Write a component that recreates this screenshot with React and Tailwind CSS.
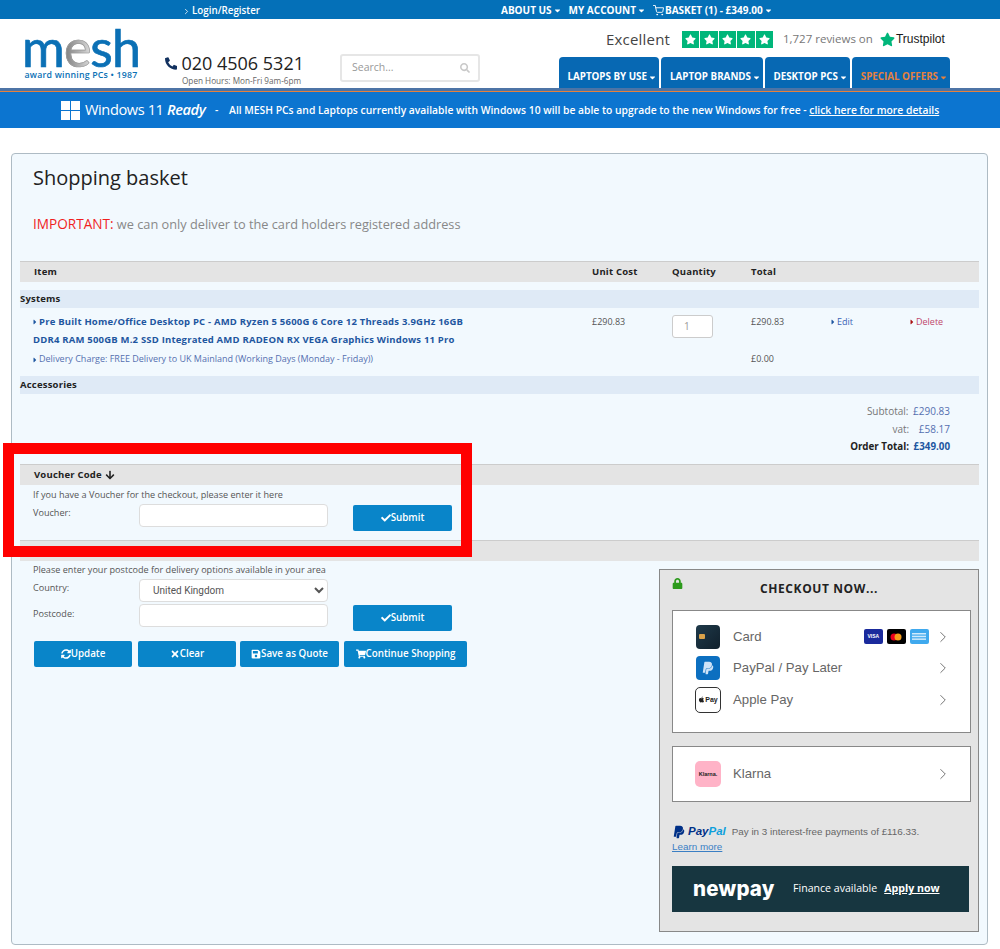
import {
  FaArrowDown,
  FaCaretDown,
  FaCaretRight,
  FaCheck,
  FaLock,
  FaPhoneAlt,
  FaSave,
  FaSearch,
  FaShoppingCart,
  FaStar,
  FaSyncAlt,
  FaTimes,
  FaApple,
  FaPaypal,
} from 'react-icons/fa';
import { FiChevronRight, FiShoppingCart } from 'react-icons/fi';

const TopLink = ({ children }) => (
  <span className="flex items-center gap-[1px] text-[10px] font-bold text-white">
    {children}
    <FaCaretDown className="text-[9px]" />
  </span>
);

const NavTab = ({ label, width, orange }) => (
  <div
    className={`flex h-[31px] items-center justify-end gap-[1px] whitespace-nowrap rounded-t-[4px] bg-[#0768b3] pr-[2px] pt-[9px] text-[9.8px] font-bold ${width} ${
      orange ? 'text-[#e5813e]' : 'text-white'
    }`}
  >
    {label}
    <FaCaretDown className="text-[9px]" />
  </div>
);

const Logo = () => (
  <div className="flex w-[112px] flex-col items-center pt-[8px]">
    <div className="flex h-[40px] items-end font-['Lato'] text-[52px] leading-[40px] tracking-[-1px] text-[#0b70b5] [-webkit-text-stroke:0.7px_#0b70b5]">
      <span>m</span>
      <span className="bg-gradient-to-r from-[#7d7d7d] to-[#d8d8d8] bg-clip-text text-transparent [-webkit-text-stroke:0.7px_#9a9a9a]">
        e
      </span>
      <span>sh</span>
    </div>
    <div className="mt-[2px] whitespace-nowrap text-[8.8px] font-semibold leading-[12px] tracking-[0.2px] text-[#0b70b5]">
      award winning PCs • 1987
    </div>
  </div>
);

const Header = () => (
  <>
    <div className="flex h-[19px] items-center bg-[#0470b8] pl-[182px]">
      <span className="flex w-[319px] items-center gap-[1px] pt-[3px] text-[9.8px] font-semibold text-white">
        <FiChevronRight className="text-[9px]" />
        Login/Register
      </span>
      <div className="flex items-center gap-[7px] pt-[1px]">
        <TopLink>ABOUT US</TopLink>
        <TopLink>MY ACCOUNT</TopLink>
        <TopLink>
          <FiShoppingCart className="text-[11px]" />
          BASKET (1) - £349.00
        </TopLink>
      </div>
    </div>

    <div className="flex h-[69px] bg-white pl-[25px]">
      <Logo />
      <div className="ml-[28px] flex w-[139px] flex-col pt-[32px]">
        <div className="flex items-center gap-[4px] text-[#222]">
          <FaPhoneAlt className="text-[13px] text-[#12315f]" />
          <span className="whitespace-nowrap text-[18px] leading-[24px]">020 4506 5321</span>
        </div>
        <span className="whitespace-nowrap pl-[17px] text-[8.2px] leading-[11px] text-[#666]">Open Hours: Mon-Fri 9am-6pm</span>
      </div>
      <div className="ml-[36px] mt-[35px] flex h-[28px] w-[140px] items-center justify-between rounded-[3px] border-2 border-[#e6e6e6] pl-[10px] pr-[8px] text-[10.5px] text-[#999]">
        Search...
        <FaSearch className="text-[10px] text-[#c9c9c9]" />
      </div>
      <div className="ml-[79px] flex w-[392px] flex-col">
        <div className="flex h-[39px] items-center pl-[47px] pt-[2px]">
          <span className="w-[76px] text-[15px] tracking-[0.2px] text-[#444]">Excellent</span>
          <div className="flex gap-[1px]">
            {[0, 1, 2, 3, 4].map((i) => (
              <div key={i} className="flex h-[17px] w-[17.4px] items-center justify-center bg-[#00b67a]">
                <FaStar className="text-[11px] text-white" />
              </div>
            ))}
          </div>
          <span className="ml-[10px] w-[97px] whitespace-nowrap text-[11.5px] text-[#777]">1,727 reviews on</span>
          <FaStar className="mr-[1px] text-[15px] text-[#00b67a]" />
          <span className="font-['Liberation_Sans'] text-[12px] font-medium text-[#191919]">Trustpilot</span>
        </div>
        <div className="flex">
          <NavTab label="LAPTOPS BY USE" width="w-[100px]" />
          <NavTab label="LAPTOP BRANDS" width="ml-[2px] w-[102px]" />
          <NavTab label="DESKTOP PCS" width="ml-[2px] w-[85px]" />
          <NavTab label="SPECIAL OFFERS" width="ml-[2px] w-[98px]" orange />
        </div>
      </div>
    </div>

    <div className="h-[3px] bg-[#4d74a6]" />
    <div className="h-[1px] bg-[#e5813e]" />
    <div className="flex h-[36px] items-center bg-[#0c75d0] pl-[61px] text-white">
      <svg width="19" height="19" viewBox="0 0 19 19" fill="currentColor">
        <rect width="9" height="9" />
        <rect x="10" width="9" height="9" />
        <rect y="10" width="9" height="9" />
        <rect x="10" y="10" width="9" height="9" />
      </svg>
      <span className="ml-[5px] w-[121px] whitespace-nowrap text-[14.6px] tracking-[-0.4px]">
        Windows 11 <em className="font-semibold">Ready</em>
      </span>
      <span className="ml-[9px] whitespace-nowrap pt-[2px] text-[10.33px] font-semibold">
        -&nbsp;&nbsp;&nbsp;&nbsp;All MESH PCs and Laptops currently available with Windows 10 will be able to upgrade to
        the new Windows for free - <span className="underline">click here for more details</span>
      </span>
    </div>
  </>
);

const BasketTable = () => (
  <div className="mx-[8px] mt-[27px]">
    <div className="grid h-[21px] grid-cols-[572px_80px_79px_80px] items-center border-t border-[#ccc] bg-[#e4e4e4] text-[9.5px] font-bold tracking-[0.2px] text-[#222]">
      <span className="pl-[14px]">Item</span>
      <span>Unit Cost</span>
      <span>Quantity</span>
      <span>Total</span>
    </div>
    <div className="mt-[8px] flex h-[18px] items-center bg-[#dfeaf6] text-[9.5px] font-bold tracking-[0.2px] text-[#222]">
      Systems
    </div>
    <div className="grid grid-cols-[572px_80px_79px_80px_79px_69px] pt-[5px] text-[9px] text-[#555]">
      <div className="pl-[13px] text-[9.5px] font-bold leading-[18px] tracking-[0.2px] text-[#1e56a0]">
        <FaCaretRight className="-ml-[2px] inline text-[8px]" />
        Pre Built Home/Office Desktop PC - AMD Ryzen 5 5600G 6 Core 12 Threads 3.9GHz 16GB
        <br />
        DDR4 RAM 500GB M.2 SSD Integrated AMD RADEON RX VEGA Graphics Windows 11 Pro
      </div>
      <span className="leading-[18px]">£290.83</span>
      <div className="pt-[2px]">
        <div className="flex h-[23px] w-[41px] items-center rounded-[3px] border border-[#ccc] bg-white pl-[11px] text-[10px] text-[#999]">
          1
        </div>
      </div>
      <span className="leading-[18px]">£290.83</span>
      <span className="-ml-[2px] flex h-[18px] items-center text-[#3b63b5]">
        <FaCaretRight className="text-[8px] text-[#1e56a0]" />
        Edit
      </span>
      <span className="-ml-[2px] flex h-[18px] items-center text-[#c0476b]">
        <FaCaretRight className="text-[8px] text-[#a11]" />
        Delete
      </span>
      <div className="pl-[13px] pt-[1px] leading-[18px] text-[#5570b0]">
        <FaCaretRight className="-ml-[2px] inline text-[8px] text-[#1e56a0]" />
        Delivery Charge: FREE Delivery to UK Mainland (Working Days (Monday - Friday))
      </div>
      <span />
      <span />
      <span className="pt-[1px] leading-[18px]">£0.00</span>
    </div>
    <div className="mt-[8px] flex h-[18px] items-center bg-[#dfeaf6] text-[9.5px] font-bold tracking-[0.2px] text-[#222]">
      Accessories
    </div>
    <div className="flex flex-col items-end gap-0 pr-[29px] pt-[8px] text-[10px] leading-[18px] text-[#777]">
      <div>
        Subtotal: <span className="ml-[2px] text-[#5570b0]">£290.83</span>
      </div>
      <div>
        vat: <span className="ml-[7px] text-[#5570b0]">£58.17</span>
      </div>
      <div className="text-[9.8px] font-bold text-[#222]">
        Order Total: <span className="ml-[2px] text-[#1e56a0]">£349.00</span>
      </div>
    </div>
  </div>
);

const BlueButton = ({ icon, children, width }) => (
  <button
    type="button"
    className={`flex h-[26px] items-center justify-center whitespace-nowrap rounded-[2px] bg-[#0985c9] text-[9.8px] font-semibold text-white ${width}`}
  >
    {icon}
    {children}
  </button>
);

const textInput = 'h-[23px] w-[189px] rounded-[4px] border border-[#ddd] bg-white';

const LeftForms = () => (
  <div className="w-[639px] pl-[13px] text-[9.1px] text-[#555]">
    <p className="pt-[2px] leading-[14px]">Please enter your postcode for delivery options available in your area</p>
    <div className="flex">
      <div className="w-[106px]">
        <div className="pt-[4px] leading-[14px]">Country:</div>
        <div className="pt-[12px] leading-[14px]">Postcode:</div>
      </div>
      <div className="flex flex-col gap-[2px] pt-[2px]">
        <select className="h-[23px] w-[189px] rounded-[4px] border border-[#ddd] bg-white pl-[9px] font-['Roboto'] text-[10px] text-[#555]">
          <option>United Kingdom</option>
        </select>
        <div className={textInput} />
      </div>
      <div className="ml-[25px] pt-[28px]">
        <BlueButton icon={<FaCheck className="text-[10px]" />} width="w-[99px]">
          Submit
        </BlueButton>
      </div>
    </div>
    <div className="mt-[10px] flex pl-[1px]">
      <BlueButton icon={<FaSyncAlt className="text-[10px]" />} width="w-[98px]">
        Update
      </BlueButton>
      <BlueButton icon={<FaTimes className="text-[10px]" />} width="ml-[6px] w-[98px]">
        Clear
      </BlueButton>
      <BlueButton icon={<FaSave className="text-[10px]" />} width="ml-[4px] w-[99px]">
        Save as Quote
      </BlueButton>
      <BlueButton icon={<FaShoppingCart className="text-[10px]" />} width="ml-[5px] w-[123px]">
        Continue Shopping
      </BlueButton>
    </div>
  </div>
);

const PayRow = ({ icon, label, extra }) => (
  <div className="flex h-[31.5px] items-center pl-[16px] pr-[18px]">
    <div className="flex w-[38px] justify-center">{icon}</div>
    <span className="ml-[6px] flex-1 font-['Liberation_Sans'] text-[13.2px] text-[#666]">{label}</span>
    {extra}
    <FiChevronRight strokeWidth={1.2} className="ml-[5px] text-[18px] text-[#666]" />
  </div>
);

const CardLogos = () => (
  <div className="flex gap-[3.5px]">
    <div className="flex h-[15px] w-[19.5px] items-center justify-center rounded-[2px] bg-[#1a2a9c] font-['Liberation_Sans'] text-[5px] font-bold text-white">
      VISA
    </div>
    <div className="flex h-[15px] w-[19.5px] items-center justify-center rounded-[2px] bg-black">
      <svg width="12" height="8" viewBox="0 0 12 8">
        <circle cx="4" cy="4" r="3.5" fill="#eb001b" />
        <circle cx="8" cy="4" r="3.5" fill="#f79e1b" />
      </svg>
    </div>
    <div className="flex h-[15px] w-[19.5px] items-center justify-center rounded-[2px] bg-[#3fa9ee]">
      <svg width="14" height="7" viewBox="0 0 14 7" fill="#cfeafc">
        <rect width="14" height="1.5" />
        <rect y="2.7" width="14" height="1.5" />
        <rect y="5.4" width="14" height="1.5" />
      </svg>
    </div>
  </div>
);

const CheckoutBox = () => (
  <div className="mt-[8px] h-[363px] w-[320px] border border-[#888] bg-[#e4e4e4] pl-[12px] pr-[7px]">
    <div className="relative flex h-[40px] items-center justify-center pb-[2px] pr-[5px] text-[12px] font-bold tracking-[0.6px] text-[#222]">
      <FaLock className="absolute left-0 top-[8px] text-[11px] text-[#2c9a1c]" />
      CHECKOUT NOW...
    </div>
    <div className="flex h-[123px] flex-col border border-[#888] bg-white pt-[10px]">
      <PayRow
        label="Card"
        extra={<CardLogos />}
        icon={
          <div className="flex h-[24px] w-[24px] items-center rounded-[4px] bg-gradient-to-br from-[#1f3a4a] to-[#10202c] pl-[3px]">
            <div className="h-[5px] w-[6px] rounded-[1px] bg-[#d9a24a]" />
          </div>
        }
      />
      <PayRow
        label="PayPal / Pay Later"
        icon={
          <div className="flex h-[24px] w-[24px] items-center justify-center rounded-[4px] bg-[#0c6fc0]">
            <FaPaypal className="text-[14px] text-[#cfe3f7]" />
          </div>
        }
      />
      <PayRow
        label="Apple Pay"
        icon={
          <div className="flex h-[26px] w-[26px] items-center justify-center rounded-[5px] border border-[#333] bg-white font-['Liberation_Sans'] text-[7px] font-semibold text-[#222]">
            <FaApple className="text-[7px]" />
            Pay
          </div>
        }
      />
    </div>
    <div className="mt-[13px] flex h-[56px] items-center border border-[#888] bg-white">
      <div className="w-full">
        <PayRow
          label="Klarna"
          icon={
            <div className="flex h-[26px] w-[26px] items-center justify-center rounded-[5px] bg-[#ffb3c7] font-['Liberation_Sans'] text-[5.5px] font-bold text-[#222]">
              Klarna.
            </div>
          }
        />
      </div>
    </div>
    <div className="pt-[22px] font-['Liberation_Sans'] text-[9.85px] leading-[15px] text-[#666]">
      <div className="flex items-center">
        <FaPaypal className="text-[14px] text-[#003087]" />
        <span className="ml-[2px] mr-[6px] text-[11.5px] font-bold italic text-[#003087]">
          Pay<span className="text-[#0d9fdc]">Pal</span>
        </span>
        Pay in 3 interest-free payments of £116.33.
      </div>
      <span className="text-[#3b7fc4] underline">Learn more</span>
    </div>
    <div className="mt-[12px] flex h-[46px] w-[297px] items-center bg-[#173640] pl-[21px] text-white">
      <span className="w-[100px] font-['Inter'] text-[20.5px] font-extrabold tracking-[0.2px]">newpay</span>
      <span className="text-[10.6px]">Finance available</span>
      <span className="ml-[7px] text-[10.6px] font-bold underline">Apply now</span>
    </div>
  </div>
);

export default function App() {
  return (
    <div className="relative h-[949px] overflow-hidden bg-white font-['Open_Sans',sans-serif]">
      <Header />

      <div className="ml-[11px] mr-[12px] mt-[25px] h-[792px] rounded-[4px] border border-[#aebbc4] bg-[#f2f9fe]">
        <h1 className="pl-[21px] pt-[8px] text-[20px] leading-[32px] text-[#222]">Shopping basket</h1>
        <p className="pl-[21px] pt-[20px] text-[12.75px] leading-[20px] text-[#888]">
          <span className="text-[13.6px] text-[#f01f1f]">IMPORTANT:</span> we can only deliver to the card holders
          registered address
        </p>

        <BasketTable />

        <div className="mx-[8px] mt-[8px]">
          <div className="flex h-[21px] items-center gap-[3px] border-t border-[#ccc] bg-[#e4e4e4] pl-[14px] text-[9.5px] font-bold tracking-[0.2px] text-[#222]">
            Voucher Code <FaArrowDown className="text-[10px]" />
          </div>
          <div className="flex h-[55px] pl-[13px] text-[9.1px] text-[#555]">
            <div className="w-[106px] pt-[3px] leading-[14px]">
              <div className="w-[300px]">If you have a Voucher for the checkout, please enter it here</div>
              <div className="pt-[4px]">Voucher:</div>
            </div>
            <div className="pt-[19px]">
              <div className={textInput} />
            </div>
            <div className="ml-[25px] pt-[20px]">
              <BlueButton icon={<FaCheck className="text-[10px]" />} width="w-[99px]">
                Submit
              </BlueButton>
            </div>
          </div>
          <div className="h-[21px] border-t border-[#ccc] bg-[#e4e4e4]" />
          <div className="flex">
            <LeftForms />
            <CheckoutBox />
          </div>
        </div>
      </div>

      {/* red highlight drawn over the voucher block */}
      <div className="absolute left-[3px] top-[443px] h-[114px] w-[469px] border-[11px] border-[#ff0000]" />
    </div>
  );
}
